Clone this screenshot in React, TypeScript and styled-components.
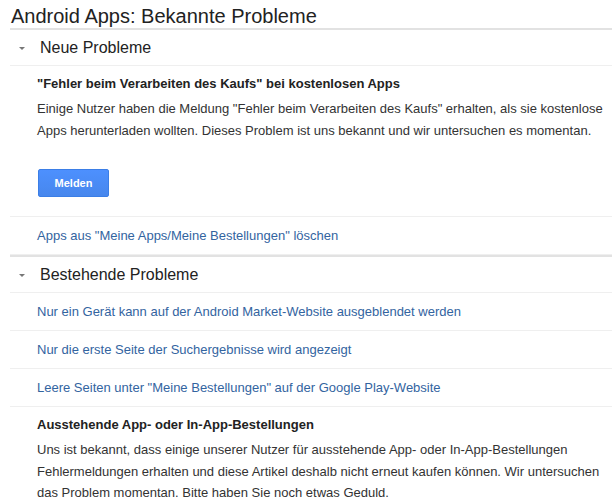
import React from "react";
import styled, { createGlobalStyle } from "styled-components";

const sections = [
  {
    title: "Neue Probleme",
    items: [
      {
        kind: "article",
        heading: '"Fehler beim Verarbeiten des Kaufs" bei kostenlosen Apps',
        text: 'Einige Nutzer haben die Meldung "Fehler beim Verarbeiten des Kaufs" erhalten, als sie kostenlose Apps herunterladen wollten. Dieses Problem ist uns bekannt und wir untersuchen es momentan.',
        button: "Melden",
      },
      { kind: "link", text: 'Apps aus "Meine Apps/Meine Bestellungen" löschen' },
    ],
  },
  {
    title: "Bestehende Probleme",
    items: [
      { kind: "link", text: "Nur ein Gerät kann auf der Android Market-Website ausgeblendet werden" },
      { kind: "link", text: "Nur die erste Seite der Suchergebnisse wird angezeigt" },
      { kind: "link", text: 'Leere Seiten unter "Meine Bestellungen" auf der Google Play-Website' },
      {
        kind: "article",
        heading: "Ausstehende App- oder In-App-Bestellungen",
        text: "Uns ist bekannt, dass einige unserer Nutzer für ausstehende App- oder In-App-Bestellungen Fehlermeldungen erhalten und diese Artikel deshalb nicht erneut kaufen können. Wir untersuchen das Problem momentan. Bitte haben Sie noch etwas Geduld.",
      },
    ],
  },
];

const App = () => {
  return (
    <>
      <GlobalStyle />
      <Page>
        <Title>Android Apps: Bekannte Probleme</Title>
        {sections.map((section, sIndex) => (
          <Section key={sIndex} last={sIndex === sections.length - 1}>
            <SectionHeader>
              <Caret />
              <SectionTitle>{section.title}</SectionTitle>
            </SectionHeader>
            {section.items.map((item, index) =>
              item.kind === "link" ? (
                <LinkRow key={index}>
                  <ItemLink href="#">{item.text}</ItemLink>
                </LinkRow>
              ) : (
                <Article key={index}>
                  <ArticleHeading>{item.heading}</ArticleHeading>
                  <ArticleText>{item.text}</ArticleText>
                  {item.button && (
                    <ButtonContainer>
                      <ReportButton>{item.button}</ReportButton>
                    </ButtonContainer>
                  )}
                </Article>
              )
            )}
          </Section>
        ))}
      </Page>
    </>
  );
};

const GlobalStyle = createGlobalStyle`
  html, body {
    margin: 0;
    padding: 0;
    background: #fff;
  }
  body {
    font-family: "Liberation Sans", Arial, sans-serif;
    color: #222;
    overflow: hidden;
  }
`;

const Page = styled.div`
  padding-left: 10px;
  width: 602px;
`;

const Title = styled.h1`
  margin: 0;
  padding: 4px 0 0 1px;
  height: 24px;
  line-height: 24px;
  font-size: 20px;
  font-weight: normal;
  color: #222;
  border-bottom: 2px solid #e2e2e2;
`;

const Section = styled.div<{ last?: boolean }>`
  border-bottom: ${({ last }) => (last ? "none" : "2px solid #e2e2e2")};
`;

const SectionHeader = styled.div`
  display: flex;
  align-items: center;
  height: 35px;
  padding-left: 9px;
  border-bottom: 1px solid #efefef;
`;

const Caret = styled.span`
  width: 0;
  height: 0;
  border-left: 3px solid transparent;
  border-right: 3px solid transparent;
  border-top: 3px solid #777;
  margin-right: 15px;
  margin-top: 1px;
`;

const SectionTitle = styled.h2`
  margin: 0;
  font-size: 16px;
  font-weight: normal;
  color: #222;
`;

const LinkRow = styled.div`
  display: flex;
  align-items: center;
  height: 37px;
  padding-left: 27px;
  border-bottom: 1px solid #efefef;
`;

const ItemLink = styled.a`
  font-size: 13px;
  color: #33649f;
  text-decoration: none;
`;

const Article = styled.div`
  padding: 7px 0 0 27px;
  border-bottom: 1px solid #efefef;
`;

const ArticleHeading = styled.h3`
  margin: 0;
  font-size: 13px;
  line-height: 21px;
  font-weight: bold;
  color: #222;
`;

const ArticleText = styled.p`
  margin: 4px 0 0 0;
  font-size: 13px;
  line-height: 21.5px;
  color: #333;
  padding-right: 4px;
`;

const ButtonContainer = styled.div`
  display: flex;
  padding: 28px 0 19px 1px;
`;

const ReportButton = styled.button`
  width: 71px;
  height: 28px;
  padding: 0;
  background: linear-gradient(#4d90fe, #4787ed);
  border: 1px solid #3b7ee6;
  border-radius: 2px;
  color: #fff;
  font-family: "Liberation Sans", Arial, sans-serif;
  font-size: 11px;
  font-weight: bold;
`;

export default App;
